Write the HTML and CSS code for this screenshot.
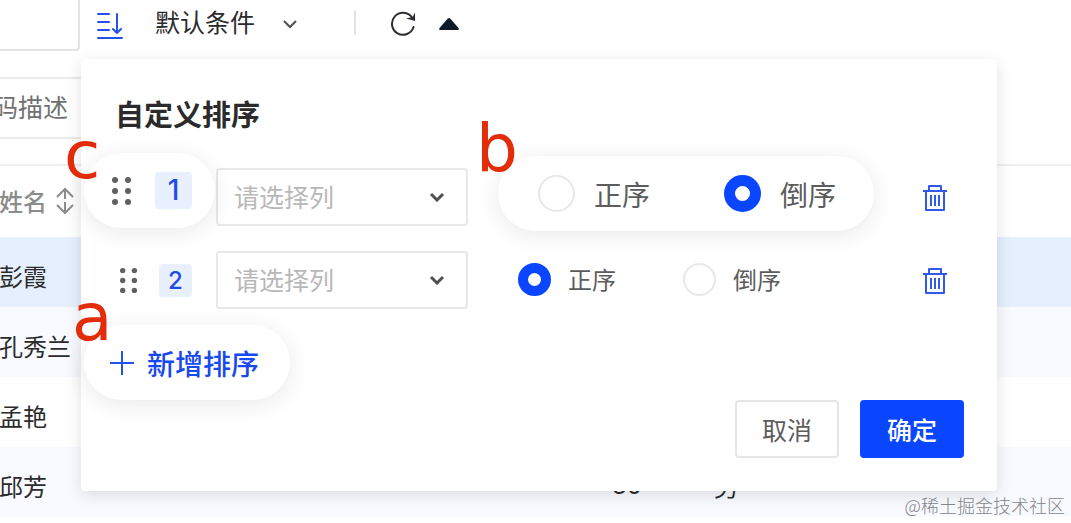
FILE: index.html
```html
<!DOCTYPE html>
<html lang="zh-CN">
<head>
<meta charset="utf-8">
<title>自定义排序</title>
<link rel="stylesheet" href="styles.css">
</head>
<body>
<main class="page">
  <header class="toolbar">
    <input class="search" type="text" aria-label="搜索">
    <button class="sort-menu" type="button">
      <svg class="sort-icon" width="28" height="28" viewBox="0 0 28 28" aria-hidden="true"><path d="M2 2h11M2 10h11M2 18h11M2 26h24M21 2v19M17 17l4 4 4-4"/></svg>
      <span>默认条件</span>
      <svg class="chevron" width="16" height="10" viewBox="0 0 16 10" aria-hidden="true"><path d="M2 2l6 6 6-6"/></svg>
    </button>
    <span class="divider"></span>
    <button class="icon-button" type="button" aria-label="刷新">
      <svg class="reload" width="26" height="26" viewBox="0 0 26 26" aria-hidden="true"><path d="M23.500 16A11 11 0 1 1 22 6.500"/><path class="reload-head" d="M16 7.500l9 2.500V1.500L22.500 6z"/></svg>
    </button>
    <button class="icon-button" type="button" aria-label="收起">
      <svg width="22" height="14" viewBox="0 0 22 14" aria-hidden="true"><path fill="#101c28" d="M9.800 1.500Q11 .3 12.200 1.500L20.500 11Q21.500 13 19.500 13H2.500Q.5 13 1.500 11z"/></svg>
    </button>
  </header>
  <div class="filter">码描述</div>
  <table class="people">
    <thead>
      <tr><th class="name" scope="col"><span class="head-label">姓名<svg class="sort-arrows" width="20" height="28" viewBox="0 0 20 28" aria-hidden="true"><path d="M10 12V2M2 10l8-8 8 8M10 15v11M2 18l8 8 8-8"/></svg></span></th><th class="age"></th><th></th></tr>
    </thead>
    <tbody>
      <tr class="selected"><td>彭霞</td><td></td><td></td></tr>
      <tr class="striped"><td>孔秀兰</td><td></td><td></td></tr>
      <tr><td>孟艳</td><td></td><td></td></tr>
      <tr class="striped"><td>邱芳</td><td class="number">30</td><td>男</td></tr>
    </tbody>
  </table>

  <form class="popover">
    <h2 class="title">自定义排序</h2>
    <div class="rule">
      <div class="order raised raised-order">
        <svg class="grip" width="20" height="30" viewBox="0 0 20 30" aria-hidden="true"><circle cx="3" cy="4" r="3"/><circle cx="16" cy="4" r="3"/><circle cx="3" cy="15" r="3"/><circle cx="16" cy="15" r="3"/><circle cx="3" cy="26" r="3"/><circle cx="16" cy="26" r="3"/></svg>
        <span class="badge">1</span>
        <span class="mark mark-c">c</span>
      </div>
      <div class="field">
        <select class="column" aria-label="排序列 1"><option>请选择列</option></select>
        <svg class="chevron" width="16" height="10" viewBox="0 0 16 10" aria-hidden="true"><path d="M2 2l6 6 6-6"/></svg>
      </div>
      <div class="direction raised raised-direction">
        <label class="option"><input type="radio" name="direction1">正序</label>
        <label class="option"><input type="radio" name="direction1" checked>倒序</label>
        <span class="mark mark-b">b</span>
      </div>
      <button class="icon-button" type="button" aria-label="删除排序 1">
        <svg class="trash" width="26" height="28" viewBox="0 0 26 28" aria-hidden="true"><path d="M1 7h24M7 7V2h12v5M4 7v19h18V7M9 11v11M13 11v11M17 11v11"/></svg>
      </button>
    </div>
    <div class="rule">
      <div class="order">
        <svg class="grip" width="18" height="27" viewBox="0 0 20 30" aria-hidden="true"><circle cx="3" cy="4" r="3"/><circle cx="16" cy="4" r="3"/><circle cx="3" cy="15" r="3"/><circle cx="16" cy="15" r="3"/><circle cx="3" cy="26" r="3"/><circle cx="16" cy="26" r="3"/></svg>
        <span class="badge">2</span>
      </div>
      <div class="field">
        <select class="column" aria-label="排序列 2"><option>请选择列</option></select>
        <svg class="chevron" width="16" height="10" viewBox="0 0 16 10" aria-hidden="true"><path d="M2 2l6 6 6-6"/></svg>
      </div>
      <div class="direction">
        <label class="option"><input type="radio" name="direction2" checked>正序</label>
        <label class="option"><input type="radio" name="direction2">倒序</label>
      </div>
      <button class="icon-button" type="button" aria-label="删除排序 2">
        <svg class="trash" width="26" height="28" viewBox="0 0 26 28" aria-hidden="true"><path d="M1 7h24M7 7V2h12v5M4 7v19h18V7M9 11v11M13 11v11M17 11v11"/></svg>
      </button>
    </div>
    <button class="add raised" type="button">
      <svg class="plus" width="26" height="26" viewBox="0 0 26 26" aria-hidden="true"><path d="M13 1v24M1 13h24"/></svg>
      <span>新增排序</span>
      <span class="mark mark-a">a</span>
    </button>
    <div class="actions">
      <button class="action" type="button">取消</button>
      <button class="action primary" type="submit">确定</button>
    </div>
  </form>
  <span class="watermark">@稀土掘金技术社区</span>
</main>
</body>
</html>
```

FILE: styles.css
```css
* { box-sizing: border-box; }

body {
  margin: 0;
  background: #fff;
  color: #2b2b2b;
  font: 24px/36px "Noto Sans CJK SC", sans-serif;
}

button, input, select { font: inherit; color: inherit; margin: 0; }
button { padding: 0; border: 0; background: none; }
svg { fill: none; display: block; }

.page {
  position: relative;
  min-height: 100vh;
  overflow: hidden;
}

/* Toolbar */
.toolbar {
  display: flex;
  align-items: center;
  height: 51px;
}
.search {
  align-self: stretch;
  width: 80px;
  border: solid #e4e4e4;
  border-width: 0 2px 2px 0;
  border-radius: 0 0 4px 0;
}
.sort-menu {
  display: flex;
  align-items: center;
  margin-left: 16px;
  padding-bottom: 4px;
  font-size: 25px;
}
.sort-menu span { margin: 0 27px 0 31px; padding-bottom: 5px; }
.sort-icon { stroke: #2450ee; stroke-width: 2; stroke-linecap: round; stroke-linejoin: round; margin-top: 4px; }
.chevron { stroke: #505050; stroke-width: 2; }
.divider { width: 2px; height: 24px; margin: 0 34px 6px 56px; background: #e2e2e2; }
.toolbar .icon-button { margin: 0 22px 3px 0; }
.reload { stroke: #2c2f33; stroke-width: 2; stroke-linecap: round; }
.reload-head { fill: #2c2f33; stroke: none; }

/* Page content */
.filter {
  width: 160px;
  margin: 26px 0 0 -10px;
  padding: 9px 0 13px 1px;
  border: 2px solid #ebebeb;
  color: #707070;
  font-size: 25px;
}
.people {
  width: 100%;
  margin-top: 25px;
  border-collapse: collapse;
  table-layout: fixed;
}
.people th, .people td {
  height: 70px;
  padding: 8px 0 0;
  text-align: left;
}
.people td:first-child, .people th:first-child { text-indent: -1px; }
.people th { height: 72px; padding: 0 0 2px; border-top: 2px solid #efefef; color: #8c8c8c; font-weight: 500; }
.people .number { font-family: Inter, sans-serif; }
.name { width: 612px; }
.age { width: 102px; }
.head-label { display: flex; align-items: center; gap: 8px; }
.sort-arrows { stroke: #8c8c8c; stroke-width: 2; }
.selected { background: #e6effe; }
.striped { background: #f8faff; }

/* Popover */
.popover {
  position: absolute;
  top: 59px;
  left: 81px;
  right: 74px;
  padding: 34px 33px 33px 3px;
  border-radius: 4px;
  background: #fff;
  box-shadow: 0 4px 16px rgba(0, 0, 0, .12);
}
.title {
  margin: 0 0 35px 31px;
  font-size: 29px;
  line-height: 40px;
  font-weight: 700;
}
.rule {
  display: grid;
  grid-template-columns: 131px 252px 1fr auto;
  align-items: start;
  height: 58px;
  margin-bottom: 25px;
  padding-right: 16px;
  column-gap: 1px;
}
.rule + .rule { margin-bottom: 16px; }

.raised {
  position: relative;
  height: 75px;
  border-radius: 38px;
  background: #fff;
  box-shadow: 0 4px 24px rgba(0, 0, 0, .09);
}
.order, .direction { display: flex; align-items: center; height: 58px; }
.order { padding-left: 36px; gap: 21px; }
.grip { fill: #606060; }
.badge {
  width: 33px;
  border-radius: 4px;
  background: #e8f0ff;
  color: #1f4be8;
  font-family: Inter, sans-serif;
  font-size: 24px;
  line-height: 33px;
  font-weight: 500;
  text-align: center;
}
.order.raised-order { height: 75px; margin: -15px 0 -2px; padding-left: 28px; gap: 23px; }
.raised-order .badge { width: 37px; font-size: 28px; line-height: 37px; }

.field { display: grid; align-items: center; }
.field > * { grid-area: 1 / 1; }
.column {
  width: 100%;
  height: 58px;
  padding: 0 16px 2px;
  appearance: none;
  border: 2px solid #e8e8e8;
  border-radius: 4px;
  background: #fff;
  color: #b8b8b8;
  font-size: 25px;
}
.field .chevron { justify-self: end; margin-right: 23px; stroke-width: 3; pointer-events: none; }

.direction { justify-self: start; margin-left: 49px; gap: 67px; padding-bottom: 2px; color: #5c5c5c; }
.option { display: flex; align-items: center; gap: 17px; }
.option input {
  width: 33px;
  height: 33px;
  appearance: none;
  border: 2px solid #e8e8e8;
  border-radius: 50%;
  background: #fff;
}
.option input:checked { border: 10px solid #0a45ff; }
.direction.raised-direction {
  height: 75px;
  margin: -12px 0 -5px 29px;
  padding: 0 38px 0 40px;
  gap: 74px;
  font-size: 28px;
}
.raised-direction .option { gap: 19px; }
.raised-direction input { width: 37px; height: 37px; }
.raised-direction input:checked { border-width: 11px; }
.rule .icon-button { margin-top: 16px; }
.trash { stroke: #3159ea; stroke-width: 2; stroke-linejoin: round; }

.add {
  display: flex;
  align-items: center;
  padding: 0 31px 0 25px;
  gap: 12px;
  color: #1748f0;
  font-size: 28px;
  font-weight: 500;
}
.plus { stroke: #2450ee; stroke-width: 2; }

.mark {
  position: absolute;
  color: #e22c0a;
  font: 66px/66px "DejaVu Sans", sans-serif;
}
.mark-a { left: -12px; top: -40px; }
.mark-b { left: -22px; top: -40px; }
.mark-c { left: -20px; top: -30px; }

.actions { display: flex; justify-content: flex-end; gap: 21px; }
.action {
  width: 104px;
  height: 58px;
  border: 2px solid #e6e6e6;
  border-radius: 4px;
  background: #fff;
  color: #5c5c5c;
  font-size: 25px;
}
.action.primary { border-color: #0a45ff; background: #0a45ff; color: #fff; font-weight: 500; }

.watermark {
  position: absolute;
  right: 6px;
  bottom: 6px;
  color: #858585;
  font-size: 18px;
  line-height: 24px;
  font-weight: 300;
}
```
